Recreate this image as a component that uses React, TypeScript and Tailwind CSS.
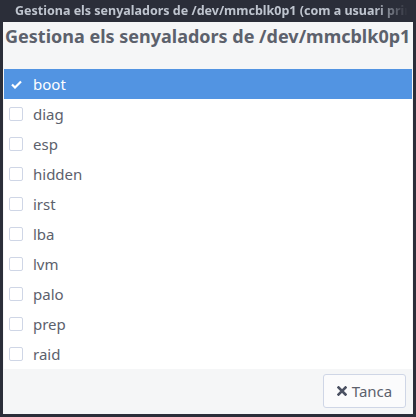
const flags = ["boot", "diag", "esp", "hidden", "irst", "lba", "lvm", "palo", "prep", "raid"];
const checked = ["boot"];

function CheckIcon() {
  return (
    <svg width="11" height="9" viewBox="0 0 11 9" className="text-white">
      <path d="M1 4.5 L4 7.5 L10 1.5" stroke="currentColor" strokeWidth="2.2" fill="none" />
    </svg>
  );
}

function CloseIcon() {
  return (
    <svg width="10" height="10" viewBox="0 0 10 10" className="text-[#4b5162]">
      <path d="M1.5 1.5 L8.5 8.5 M8.5 1.5 L1.5 8.5" stroke="currentColor" strokeWidth="2.6" strokeLinecap="square" />
    </svg>
  );
}

export default function App() {
  return (
    <div className="w-[416px] h-[417px] bg-[#2b2e39] flex flex-col font-['Noto_Sans',sans-serif] overflow-hidden">
      {/* title bar, text fades out at the right */}
      <div className="h-[22px] flex items-center pl-[15px] whitespace-nowrap [mask-image:linear-gradient(to_right,black_90%,transparent_98%)]">
        <span className="text-[12.5px] font-bold text-[#bfc5cf] leading-none">
          Gestiona els senyaladors de /dev/mmcblk0p1 (com a usuari prim
        </span>
      </div>

      {/* dialog body */}
      <div className="mx-[3px] h-[392px] bg-[#f5f6f7] flex flex-col">
        <h1 className="h-[47px] pl-[2px] pt-[2px] text-[18px] font-bold text-[#5c616c] leading-[24px] whitespace-nowrap">
          Gestiona els senyaladors de /dev/mmcblk0p1
        </h1>

        <ul className="mx-[1px] bg-white">
          {flags.map((f) => {
            const on = checked.includes(f);
            return (
              <li
                key={f}
                className={
                  "h-[30px] flex items-center gap-[10px] pl-[5px] " +
                  (on ? "bg-[#5294e2] text-white" : "text-[#5c616c]")
                }
              >
                <span
                  className={
                    "w-[14px] h-[14px] flex items-center justify-center rounded-[2px] " +
                    (on ? "" : "border border-[#cfd6e6] bg-white")
                  }
                >
                  {on && <CheckIcon />}
                </span>
                <span className="text-[15px] leading-none">{f}</span>
              </li>
            );
          })}
        </ul>

        <div className="flex-1 flex justify-end items-start pt-[5px] pr-[7px]">
          <button className="w-[83px] h-[34px] flex items-center justify-center gap-[5px] bg-[#fbfbfc] border border-[#cfd6e6] rounded-[3px] text-[15px] text-[#5c616c]">
            <CloseIcon />
            <span>Tanca</span>
          </button>
        </div>
      </div>
    </div>
  );
}
